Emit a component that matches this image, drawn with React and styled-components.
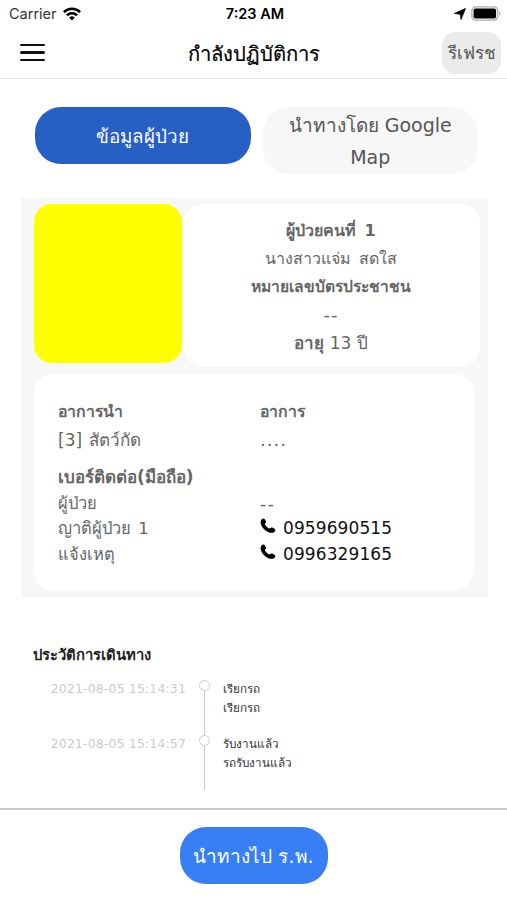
import React from "react";
import styled, { createGlobalStyle } from "styled-components";

const GlobalStyle = createGlobalStyle`
  * {
    box-sizing: border-box;
  }

  body {
    background: #fff;
    font-family: "DejaVu Sans", "Noto Sans", sans-serif;
    margin: 0;
  }

  button {
    border: 0;
    font-family: inherit;
    padding: 0;
  }
`;

const visits = [
  { time: "2021-08-05 15:14:31", title: "เรียกรถ", detail: "เรียกรถ" },
  { time: "2021-08-05 15:14:57", title: "รับงานแล้ว", detail: "รถรับงานแล้ว" },
];

const PhoneIcon = () => (
  <svg width="16" height="16" viewBox="0 0 16 16">
    <path
      d="M1.500 1.600C2.500.2 4.100.2 4.800 1.300l1.100 2c.4.9.1 1.500-.6 2-.6.5-.5 1-.1 1.700.9 1.400 2 2.500 3.400 3.300.7.4 1.200.4 1.700-.2.5-.7 1.200-.9 2-.5l2.100 1.100c1.300.7 1.200 2 .2 3-1.500 1.500-4 1.500-6.500.3C4.900 12.500 2.300 9.900 1 6.400.4 4.600.5 3 1.500 1.600Z"
      fill="#000"
    />
  </svg>
);

const App = () => {
  return (
    <>
      <GlobalStyle />
      <Screen>
        <StatusBar>
          <Carrier>
            Carrier
            <svg width="18" height="14" viewBox="0 0 18 14">
              <g fill="none" stroke="#000" strokeWidth="2.500">
                <path d="M.9 5.100a11.500 11.500 0 0 1 16.200 0" />
                <path d="M3.900 8.300a7.200 7.200 0 0 1 10.200 0" />
              </g>
              <path d="M9 13.600 6.100 10.700a4.100 4.100 0 0 1 5.800 0Z" fill="#000" />
            </svg>
          </Carrier>
          <Clock>7:23 AM</Clock>
          <StatusIcons>
            <svg width="12" height="12" viewBox="0 0 12 12">
              <path d="M11.500.5 7 11.500 6.200 6.200 .5 5.400Z" fill="#000" stroke="#000" strokeWidth=".8" />
            </svg>
            <svg width="30" height="15" viewBox="0 0 30 15">
              <rect x=".8" y=".8" width="26" height="13.400" rx="4" fill="#fff" stroke="#aaa" strokeWidth="1.200" />
              <rect x="2.500" y="2.500" width="22.600" height="10" rx="2" fill="#000" />
              <path d="M28.200 5.300c1.600.6 1.600 3.800 0 4.400Z" fill="#aaa" />
            </svg>
          </StatusIcons>
        </StatusBar>

        <Header>
          <Menu>
            <span />
            <span />
            <span />
          </Menu>
          <Title>กำลังปฏิบัติการ</Title>
          <Refresh>รีเฟรช</Refresh>
        </Header>

        <Tabs>
          <Tab $active>ข้อมูลผู้ป่วย</Tab>
          <Tab>นำทางโดย Google Map</Tab>
        </Tabs>

        <Panel>
          <Summary>
            <Photo />
            <Patient>
              <strong>ผู้ป่วยคนที่ 1</strong>
              <span>นางสาวแจ่ม สดใส</span>
              <strong>หมายเลขบัตรประชาชน</strong>
              <Dashes>--</Dashes>
              <Age><b>อายุ</b> 13 ปี</Age>
            </Patient>
          </Summary>
          <Details>
            <Symptoms>
              <b>อาการนำ</b>
              <b>อาการ</b>
              <Complaint>[3] สัตว์กัด</Complaint>
              <Dashes>....</Dashes>
            </Symptoms>
            <Contacts>
              <Wide>เบอร์ติดต่อ(มือถือ)</Wide>
              <span>ผู้ป่วย</span>
              <Dashes>--</Dashes>
              <span>ญาติผู้ป่วย 1</span>
              <Phone><PhoneIcon />0959690515</Phone>
              <span>แจ้งเหตุ</span>
              <Phone><PhoneIcon />0996329165</Phone>
            </Contacts>
          </Details>
        </Panel>

        <History>
          <h3>ประวัติการเดินทาง</h3>
          {visits.map(({ time, title, detail }) => (
            <Visit key={time}>
              <time>{time}</time>
              <Track><i /></Track>
              <VisitText>
                <span>{title}</span>
                <span>{detail}</span>
              </VisitText>
            </Visit>
          ))}
        </History>

        <Footer>
          <HospitalButton>นำทางไป ร.พ.</HospitalButton>
        </Footer>
      </Screen>
    </>
  );
};

const Screen = styled.main`
  display: flex;
  flex-direction: column;
  height: 900px;
  overflow: hidden;
  width: 507px;
`;

const StatusBar = styled.div`
  align-items: center;
  display: grid;
  font-family: Inter, sans-serif;
  font-size: 14.5px;
  grid-template-columns: 1fr auto 1fr;
  height: 27px;
  padding: 0 6px 0 9px;
`;

const Carrier = styled.div`
  align-items: center;
  color: #333;
  display: flex;
  gap: 6px;
`;

const Clock = styled.div`
  font-weight: 600;
`;

const StatusIcons = styled.div`
  align-items: center;
  display: flex;
  gap: 5px;
  justify-content: flex-end;
`;

const Header = styled.header`
  align-items: center;
  border-bottom: 1px solid #e6e6e6;
  display: grid;
  grid-template-columns: 1fr auto 1fr;
  height: 52px;
  padding: 0 6px;
`;

const Menu = styled.div`
  display: grid;
  gap: 5px;
  margin-left: 14px;
  width: 25px;

  span {
    background: #111;
    border-radius: 2px;
    height: 2.6px;
  }
`;

const Title = styled.h1`
  font-size: 20.2px;
  font-weight: 500;
  line-height: 30px;
  margin: 2px 0 0;
  -webkit-text-stroke: 0.2px #000;
  white-space: nowrap;
`;

const Refresh = styled.button`
  background: #ebebeb;
  border-radius: 13px;
  color: #555;
  font-size: 17px;
  height: 42px;
  justify-self: end;
  padding-bottom: 1px;
  width: 59px;
`;

const Tabs = styled.nav`
  align-items: flex-start;
  display: flex;
  gap: 12px;
  padding: 28px 29px 0 35px;
`;

const Tab = styled.button`
  background: ${props => props.$active ? "#285fc4" : "#f7f7f7"};
  border-radius: 26px;
  color: ${props => props.$active ? "#fff" : "#555"};
  flex: 1;
  font-size: ${props => props.$active ? "18.8px" : "19px"};
  height: ${props => props.$active ? "57px" : "67px"};
  line-height: 32px;
  padding: ${props => props.$active ? "2px 20px 0" : "0 20px"};
`;

const Panel = styled.section`
  background: #f7f7f7;
  color: #666;
  font-size: 16.5px;
  height: 399px;
  margin: 24px 19px 0 21px;
  padding: 6px 8px 0 13px;
`;

const Summary = styled.div`
  display: flex;
  gap: 2px;
`;

const Photo = styled.div`
  background: #ff0;
  border-radius: 18px;
  height: 159px;
  width: 148px;
`;

const Patient = styled.div`
  align-items: center;
  background: #fff;
  border-radius: 20px;
  display: flex;
  flex: 1;
  flex-direction: column;
  font-size: 16px;
  height: 163px;
  line-height: 28px;
  padding: 13px 2px 0 0;
  word-spacing: 2.5px;

  > * {
    height: 28px;
  }

  strong {
    font-size: 15.6px;
  }

  strong:first-child {
    font-size: 16px;
  }
`;

const Dashes = styled.span`
  font-size: 18px;
  letter-spacing: 1px;
`;

const Age = styled.span`
  font-size: 17px;
  word-spacing: 0;
`;

const Details = styled.div`
  background: #fff;
  border-radius: 20px;
  height: 216px;
  margin: 7px 6px 0 0;
  padding: 24px 24px 0;
`;

const Symptoms = styled.div`
  display: grid;
  grid-auto-rows: 28px;
  grid-template-columns: 202px 1fr;
  line-height: 28px;

  b {
    font-size: 15.8px;
  }
`;

const Complaint = styled.span`
  font-size: 17px;
  word-spacing: 2px;
`;

const Contacts = styled.div`
  display: grid;
  grid-auto-rows: 25.500px;
  grid-template-columns: 202px 1fr;
  line-height: 25.500px;
  margin-top: 11px;
  word-spacing: 2px;
`;

const Wide = styled.b`
  font-size: 17px;
  grid-column: span 2;
`;

const Phone = styled.span`
  color: #111;
  display: flex;
  font-size: 17px;
  gap: 7px;
  letter-spacing: 0.1px;

  svg {
    margin-top: 2px;
  }
`;

const History = styled.section`
  flex: 1;
  padding: 45px 33px 0;

  h3 {
    color: #222;
    font-size: 14.8px;
    line-height: 26px;
    margin: 0 0 12px;
  }
`;

const Visit = styled.div`
  display: grid;
  grid-template-columns: 153px 37px 1fr;
  height: 55px;

  time {
    color: #ccc;
    font-size: 12.5px;
    letter-spacing: 0.13px;
    line-height: 18px;
    text-align: right;
  }
`;

const Track = styled.div`
  align-items: center;
  display: flex;
  flex-direction: column;

  i {
    border: 1.500px solid #ccc;
    border-radius: 50%;
    flex: none;
    height: 11px;
    width: 11px;
  }

  &::after {
    background: #ccc;
    content: "";
    flex: 1;
    width: 1.500px;
  }
`;

const VisitText = styled.div`
  color: #333;
  display: flex;
  flex-direction: column;
  font-size: 11.7px;
  line-height: 18.500px;
`;

const Footer = styled.footer`
  border-top: 2px solid #c8c8c8;
  display: flex;
  height: 92px;
  justify-content: center;
  padding-top: 17px;
`;

const HospitalButton = styled.button`
  background: #387ef5;
  border-radius: 26px;
  color: #fff;
  font-size: 19px;
  height: 57px;
  width: 148px;
`;

export default App;
